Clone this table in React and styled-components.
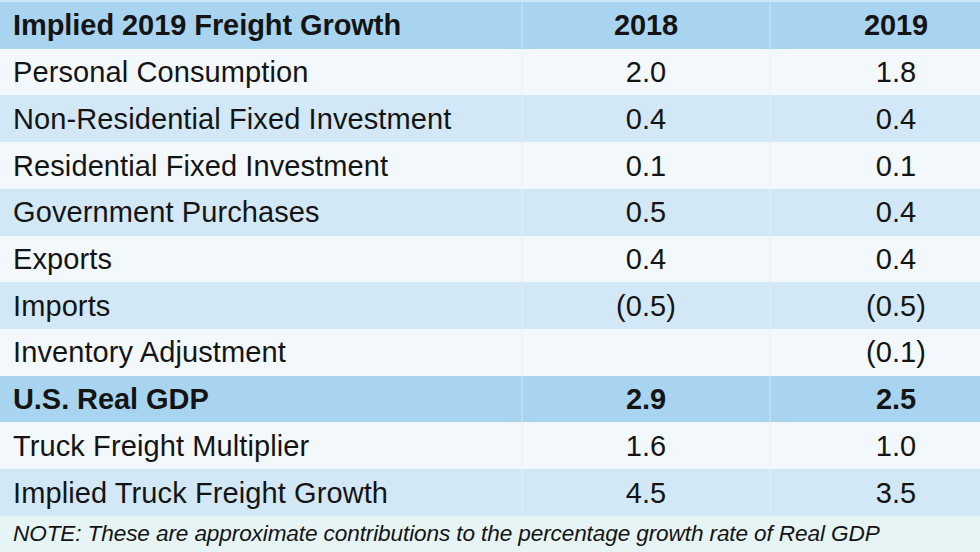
import React from "react";
import styled, { createGlobalStyle } from "styled-components";

const Global = createGlobalStyle`
  html, body { margin: 0; padding: 0; background: #ffffff; overflow: hidden; }
  body { font-family: "Liberation Sans", Arial, sans-serif; color: #141414; }
`;

const Page = styled.div`
  width: 980px;
  height: 552px;
  overflow: hidden;
  background: #e7f4f6;
`;

const Table = styled.div`
  width: 1021px;
  display: grid;
  grid-template-columns: 521px 248px 252px;
  grid-auto-rows: 46.73px;
  border-top: 2px solid #cfe8f7;
`;

const bgFor = (v) =>
  v === "head" ? "#a9d4f0" : v === "dark" ? "#d3e8f7" : "#f3f8fc";
const lineFor = (v) =>
  v === "head" ? "#bbdef4" : v === "dark" ? "#dbecf9" : "#ebf4fb";

const Cell = styled.div`
  display: flex;
  align-items: center;
  justify-content: ${(p) => (p.$label ? "flex-start" : "center")};
  padding-left: ${(p) => (p.$label ? "13px" : "0")};
  padding-top: 1px;
  background: ${(p) => bgFor(p.$v)};
  border-left: ${(p) => (p.$label ? "none" : `2px solid ${lineFor(p.$v)}`)};
  font-size: 29px;
  font-weight: ${(p) => (p.$bold ? 700 : 400)};
  letter-spacing: ${(p) => (p.$bold ? "-0.07px" : "0.1px")};
  white-space: nowrap;
  box-sizing: border-box;
`;

const Note = styled.div`
  height: 36px;
  display: flex;
  align-items: center;
  padding-left: 13px;
  font-size: 22.6px;
  font-style: italic;
  background: #e7f4f6;
  white-space: nowrap;
  letter-spacing: -0.12px;
`;

const rows = [
  { label: "Implied 2019 Freight Growth", a: "2018", b: "2019", v: "head", bold: true },
  { label: "Personal Consumption", a: "2.0", b: "1.8", v: "light" },
  { label: "Non-Residential Fixed Investment", a: "0.4", b: "0.4", v: "dark" },
  { label: "Residential Fixed Investment", a: "0.1", b: "0.1", v: "light" },
  { label: "Government Purchases", a: "0.5", b: "0.4", v: "dark" },
  { label: "Exports", a: "0.4", b: "0.4", v: "light" },
  { label: "Imports", a: "(0.5)", b: "(0.5)", v: "dark" },
  { label: "Inventory Adjustment", a: "", b: "(0.1)", v: "light" },
  { label: "U.S. Real GDP", a: "2.9", b: "2.5", v: "head", bold: true },
  { label: "Truck Freight Multiplier", a: "1.6", b: "1.0", v: "light" },
  { label: "Implied Truck Freight Growth", a: "4.5", b: "3.5", v: "dark" },
];

export default function App() {
  return (
    <Page>
      <Global />
      <Table>
        {rows.map((r) => (
          <React.Fragment key={r.label}>
            <Cell $label $v={r.v} $bold={r.bold}>{r.label}</Cell>
            <Cell $v={r.v} $bold={r.bold}>{r.a}</Cell>
            <Cell $v={r.v} $bold={r.bold}>{r.b}</Cell>
          </React.Fragment>
        ))}
      </Table>
      <Note>NOTE: These are approximate contributions to the percentage growth rate of Real GDP</Note>
    </Page>
  );
}
